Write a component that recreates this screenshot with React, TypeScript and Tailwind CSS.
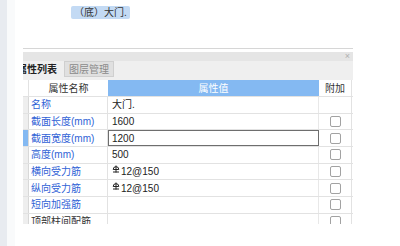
const rows = [
  { name: "名称", value: "大门.", blue: true },
  { name: "截面长度(mm)", value: "1600", blue: true, check: true },
  { name: "截面宽度(mm)", value: "1200", blue: true, check: true, selected: true },
  { name: "高度(mm)", value: "500", blue: true, check: true },
  { name: "横向受力筋", value: "12@150", blue: true, check: true, rebar: true },
  { name: "纵向受力筋", value: "12@150", blue: true, check: true, rebar: true },
  { name: "短向加强筋", value: "", blue: true, check: true },
  { name: "顶部柱间配筋", value: "", blue: false, check: true },
];

function Rebar() {
  return (
    <svg width="8" height="8" viewBox="0 0 8 8" className="mr-[1px] -mt-[5px]">
      <path d="M1.2 4.5 A2.8 2.8 0 0 1 6.8 4.5 Z" fill="none" stroke="#222" strokeWidth="1" />
      <path d="M4 0.5 V7.5 M1 7 H7" stroke="#222" strokeWidth="1" />
    </svg>
  );
}

export default function App() {
  return (
    <div
      className="flex w-[400px] h-[246px] bg-white overflow-hidden text-[#333]"
      style={{ fontFamily: '"Liberation Sans", "Noto Sans CJK SC", sans-serif' }}
    >
      {/* left strip */}
      <div className="w-[7px] shrink-0 bg-[#e8ebf0]" />
      <div className="w-[8px] shrink-0 bg-[#f9fafb]" />
      <div className="flex flex-col flex-1">
        {/* selected label */}
        <div className="shrink-0 mt-[6px] ml-[56px] self-start h-[13px] px-[3px] rounded-[2px] bg-[#c3daf4] text-[10px] leading-[13px] text-[#333]">
          （底）大门.
        </div>

        {/* panel */}
        <div className="shrink-0 mt-[29px] ml-[8px] w-[330px] h-[176px] overflow-hidden">
          <div className="h-px bg-[#d6d6d6]" />
          <div className="h-[3px] bg-white" />
          <div className="h-[9px] bg-[#e5e5e5] flex items-center justify-end pr-[3px]">
            <span className="text-[9px] leading-none text-[#b0b0b0]">×</span>
          </div>
          {/* tabs */}
          <div className="h-[19px] bg-[#efefef] flex items-start">
            <div className="h-[16px] w-[41px] shrink-0 flex items-center justify-end pr-[7px] text-[10px] font-bold text-[#222] whitespace-nowrap">
              属性列表
            </div>
            <div className="h-[16px] w-[50px] shrink-0 flex items-center justify-center border border-[#cfcfcf] bg-[#e0e0e0] text-[10px] text-[#8a8a8a]">
              图层管理
            </div>
          </div>

          {/* table */}
          <div className="text-[10px]">
            <div className="flex h-[17px] border-b border-[#e2e2e2]">
              <div className="w-[6px] border-r border-[#e2e2e2] bg-white" />
              <div className="w-[79px] flex items-center justify-center text-[#333]">属性名称</div>
              <div className="w-[211px] flex items-center justify-center bg-[#84b9f2] text-white">属性值</div>
              <div className="w-[33px] flex items-center justify-center border-r border-[#e2e2e2] text-[#333]">附加</div>
            </div>
            {rows.map((r) => (
              <div key={r.name} className="flex h-[16.67px] border-b border-[#e2e2e2]">
                <div
                  className={
                    r.selected
                      ? "w-[6px] border-r border-[#d8d8d8] bg-[#84b9f2]"
                      : "w-[6px] border-r border-[#d8d8d8] bg-[#eeeeee]"
                  }
                />
                <div
                  className={
                    r.blue
                      ? "w-[79px] flex items-center pl-[2px] border-r border-[#e2e2e2] text-[#2f62d6] whitespace-nowrap"
                      : "w-[79px] flex items-center pl-[2px] border-r border-[#e2e2e2] text-[#333] whitespace-nowrap"
                  }
                >
                  {r.name}
                </div>
                <div
                  className={
                    r.selected
                      ? "w-[211px] flex items-center pl-[3px] border border-[#6e6e6e] text-[#222]"
                      : "w-[211px] flex items-center pl-[4px] border-r border-[#e8e8e8] text-[#222]"
                  }
                >
                  {r.rebar && <Rebar />}
                  {r.value}
                </div>
                <div className="w-[33px] flex items-center justify-center border-r border-[#e2e2e2]">
                  {r.check && (
                    <div className="w-[11px] h-[11px] rounded-[2px] border border-[#a2a2a2] bg-white" />
                  )}
                </div>
              </div>
            ))}
          </div>
        </div>
      </div>
    </div>
  );
}
